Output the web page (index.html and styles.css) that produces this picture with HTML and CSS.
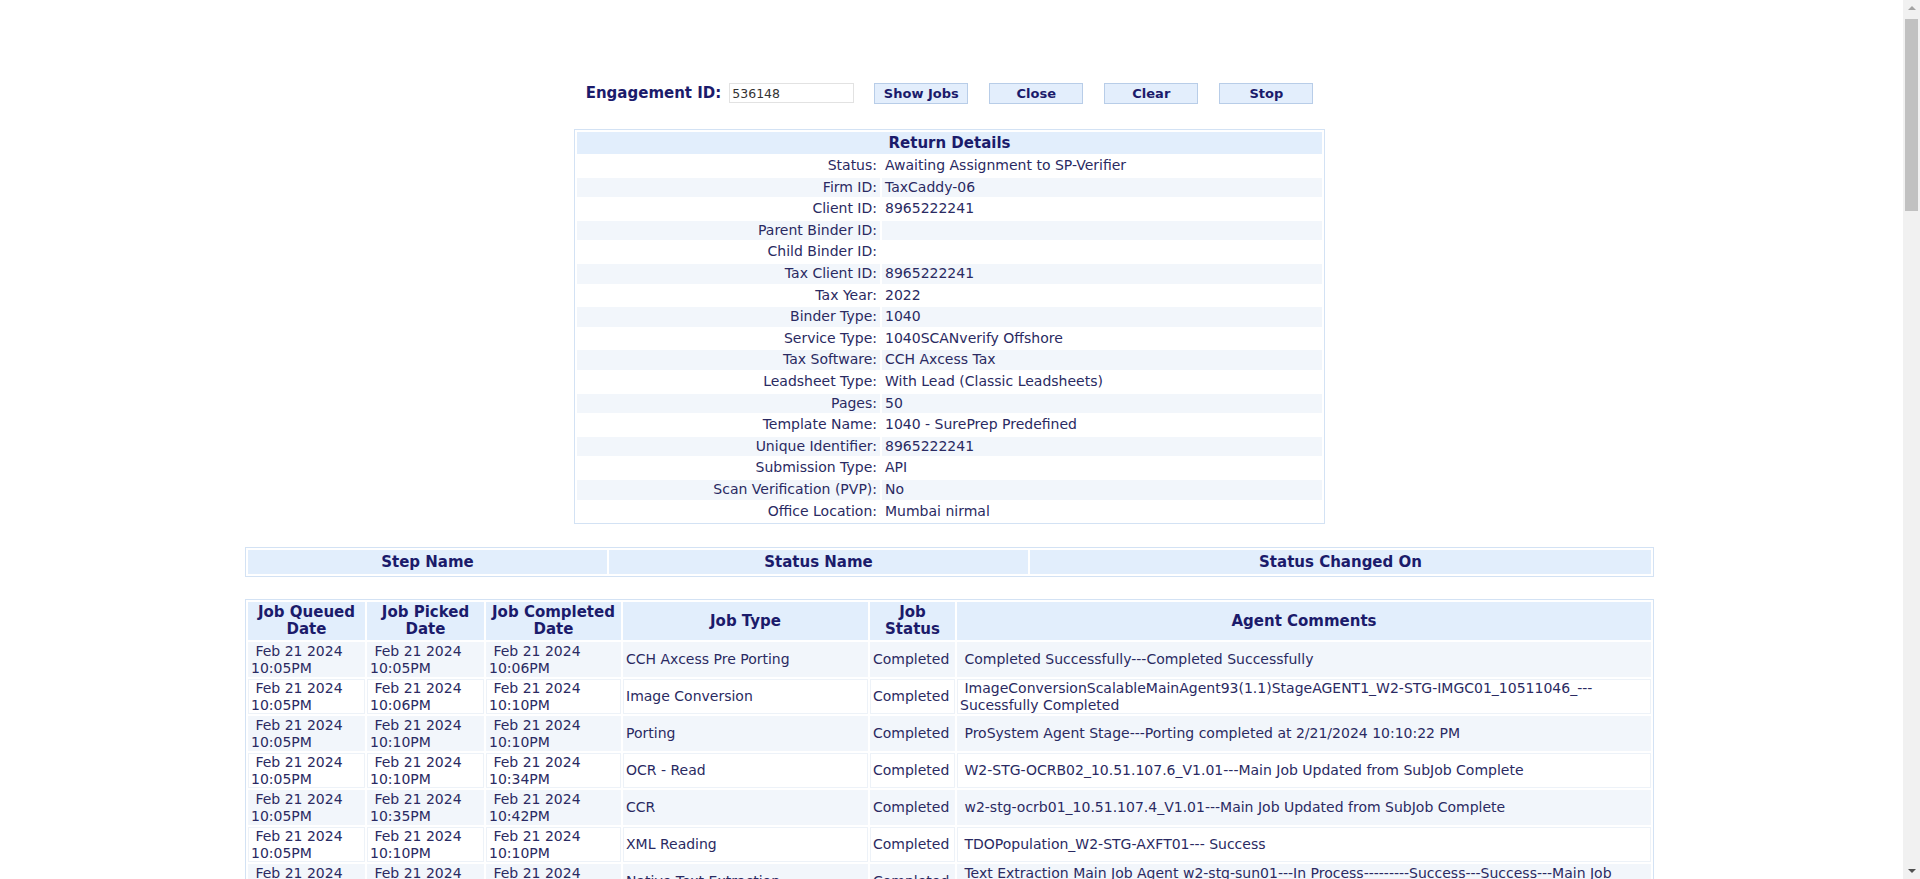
FILE: index.html
```html
<!DOCTYPE html>
<html>
<head>
<meta charset="utf-8">
<title>Job Status</title>
<link rel="stylesheet" href="styles.css">
</head>
<body>
<div class="page">
  <form class="search">
    <label class="search-label" for="eng">Engagement ID:</label>
    <input class="search-input" id="eng" type="text" value="536148">
    <div class="btns">
      <button type="button" class="btn">Show Jobs</button>
      <button type="button" class="btn">Close</button>
      <button type="button" class="btn">Clear</button>
      <button type="button" class="btn">Stop</button>
    </div>
  </form>

  <table class="details">
    <colgroup><col class="dcol-label"><col></colgroup>
    <tr><th colspan="2">Return Details</th></tr>
    <tr><td class="lbl">Status:</td><td>Awaiting Assignment to SP-Verifier</td></tr>
    <tr class="alt"><td class="lbl">Firm ID:</td><td>TaxCaddy-06</td></tr>
    <tr><td class="lbl">Client ID:</td><td>8965222241</td></tr>
    <tr class="alt"><td class="lbl">Parent Binder ID:</td><td></td></tr>
    <tr><td class="lbl">Child Binder ID:</td><td></td></tr>
    <tr class="alt"><td class="lbl">Tax Client ID:</td><td>8965222241</td></tr>
    <tr><td class="lbl">Tax Year:</td><td>2022</td></tr>
    <tr class="alt"><td class="lbl">Binder Type:</td><td>1040</td></tr>
    <tr><td class="lbl">Service Type:</td><td>1040SCANverify Offshore</td></tr>
    <tr class="alt"><td class="lbl">Tax Software:</td><td>CCH Axcess Tax</td></tr>
    <tr><td class="lbl">Leadsheet Type:</td><td>With Lead (Classic Leadsheets)</td></tr>
    <tr class="alt"><td class="lbl">Pages:</td><td>50</td></tr>
    <tr><td class="lbl">Template Name:</td><td>1040 - SurePrep Predefined</td></tr>
    <tr class="alt"><td class="lbl">Unique Identifier:</td><td>8965222241</td></tr>
    <tr><td class="lbl">Submission Type:</td><td>API</td></tr>
    <tr class="alt"><td class="lbl">Scan Verification (PVP):</td><td>No</td></tr>
    <tr><td class="lbl">Office Location:</td><td>Mumbai nirmal</td></tr>
  </table>

  <table class="steps">
    <colgroup><col class="scol-1"><col class="scol-2"><col></colgroup>
    <tr><th>Step Name</th><th>Status Name</th><th>Status Changed On</th></tr>
  </table>

  <table class="jobs">
    <colgroup>
      <col class="jcol-1"><col class="jcol-2"><col class="jcol-3"><col class="jcol-4"><col class="jcol-5"><col>
    </colgroup>
    <tr><th>Job Queued Date</th><th>Job Picked Date</th><th>Job Completed Date</th><th>Job Type</th><th>Job Status</th><th>Agent Comments</th></tr>
    <tr class="alt"><td>&nbsp;Feb 21 2024 10:05PM</td><td>&nbsp;Feb 21 2024 10:05PM</td><td>&nbsp;Feb 21 2024 10:06PM</td><td>CCH Axcess Pre Porting</td><td>Completed</td><td>&nbsp;Completed Successfully---Completed Successfully</td></tr>
    <tr><td>&nbsp;Feb 21 2024 10:05PM</td><td>&nbsp;Feb 21 2024 10:06PM</td><td>&nbsp;Feb 21 2024 10:10PM</td><td>Image Conversion</td><td>Completed</td><td>&nbsp;ImageConversionScalableMainAgent93(1.1)StageAGENT1_W2-STG-IMGC01_10511046_---Sucessfully Completed</td></tr>
    <tr class="alt"><td>&nbsp;Feb 21 2024 10:05PM</td><td>&nbsp;Feb 21 2024 10:10PM</td><td>&nbsp;Feb 21 2024 10:10PM</td><td>Porting</td><td>Completed</td><td>&nbsp;ProSystem Agent Stage---Porting completed at 2/21/2024 10:10:22 PM</td></tr>
    <tr><td>&nbsp;Feb 21 2024 10:05PM</td><td>&nbsp;Feb 21 2024 10:10PM</td><td>&nbsp;Feb 21 2024 10:34PM</td><td>OCR - Read</td><td>Completed</td><td>&nbsp;W2-STG-OCRB02_10.51.107.6_V1.01---Main Job Updated from SubJob Complete</td></tr>
    <tr class="alt"><td>&nbsp;Feb 21 2024 10:05PM</td><td>&nbsp;Feb 21 2024 10:35PM</td><td>&nbsp;Feb 21 2024 10:42PM</td><td>CCR</td><td>Completed</td><td>&nbsp;w2-stg-ocrb01_10.51.107.4_V1.01---Main Job Updated from SubJob Complete</td></tr>
    <tr><td>&nbsp;Feb 21 2024 10:05PM</td><td>&nbsp;Feb 21 2024 10:10PM</td><td>&nbsp;Feb 21 2024 10:10PM</td><td>XML Reading</td><td>Completed</td><td>&nbsp;TDOPopulation_W2-STG-AXFT01--- Success</td></tr>
    <tr class="alt"><td>&nbsp;Feb 21 2024 10:05PM</td><td>&nbsp;Feb 21 2024 10:10PM</td><td>&nbsp;Feb 21 2024 10:11PM</td><td>Native Text Extraction</td><td>Completed</td><td>&nbsp;Text Extraction Main Job Agent w2-stg-sun01---In Process---------Success---Success---Main Job Updated from SubJob Complete</td></tr>
    <tr><td>&nbsp;Feb 21 2024 10:05PM</td><td>&nbsp;Feb 21 2024 10:11PM</td><td>&nbsp;Feb 21 2024 10:12PM</td><td>Data Extraction</td><td>Completed</td><td>&nbsp;W2-STG-DEXT01---Main Job Updated from SubJob Complete</td></tr>
    <tr class="alt"><td>&nbsp;Feb 21 2024 10:05PM</td><td>&nbsp;Feb 21 2024 10:42PM</td><td>&nbsp;Feb 21 2024 10:44PM</td><td>Classification</td><td>Completed</td><td>&nbsp;W2-STG-CLSF01---Completed Successfully</td></tr>
    <tr><td>&nbsp;Feb 21 2024 10:05PM</td><td>&nbsp;Feb 21 2024 10:44PM</td><td>&nbsp;Feb 21 2024 10:45PM</td><td>Bookmarking</td><td>Completed</td><td>&nbsp;W2-STG-BKMK01---Completed Successfully</td></tr>
  </table>
</div>

<div class="scrollbar" aria-hidden="true">
  <div class="sb-arrow sb-up"></div>
  <div class="sb-track"><div class="sb-thumb"></div></div>
  <div class="sb-arrow sb-down"></div>
</div>
</body>
</html>
```

FILE: styles.css
```css
html, body {
  margin: 0;
  padding: 0;
  background: #ffffff;
}

body {
  font-family: "DejaVu Sans", sans-serif;
  font-size: 14px;
  color: #2a2a62;
}

.page {
  display: flex;
  flex-direction: column;
  align-items: center;
  margin-right: 21px;
  padding-top: 79px;
  padding-bottom: 40px;
}

/* search form */
.search {
  display: flex;
  align-items: center;
  margin: 0;
  height: 28px;
}

.search-label {
  font-weight: bold;
  font-size: 15px;
  color: #1b1b6b;
  margin-right: 8px;
}

.search-input {
  width: 125px;
  height: 20px;
  box-sizing: border-box;
  border: 1px solid #e2e2e2;
  padding: 0 2px;
  font-family: "DejaVu Sans", sans-serif;
  font-size: 12.5px;
  color: #333;
}

.btns {
  display: flex;
  gap: 21px;
  margin-left: 20px;
}

.btn {
  width: 94px;
  height: 21px;
  box-sizing: border-box;
  background: #e3eefc;
  border: 1px solid #b8cde8;
  font-family: "DejaVu Sans", sans-serif;
  font-weight: bold;
  font-size: 13px;
  color: #1b1b6b;
  padding: 0;
}

/* shared table look */
table {
  border-collapse: separate;
  border-spacing: 2px;
  border: 1px solid #d3e2f4;
  table-layout: fixed;
}

th {
  background: #e2eefc;
  color: #1b1b6b;
  font-weight: bold;
  font-size: 15px;
}

/* return details */
.details {
  width: 751px;
  margin-top: 22px;
}

.dcol-label {
  width: 303px;
}

.details th {
  padding: 0;
  height: 22px;
  line-height: 22px;
}

.details td {
  padding: 0 3px;
  height: 19.6px;
  line-height: 19.6px;
  white-space: nowrap;
}

.details td.lbl {
  text-align: right;
}

.details tr.alt td {
  background: #f2f6fb;
}

/* steps */
.steps {
  width: 1409px;
  margin-top: 23px;
}

.scol-1 { width: 359px; }
.scol-2 { width: 419px; }

.steps th {
  height: 24px;
  padding: 0;
  line-height: 24px;
}

/* jobs */
.jobs {
  width: 1409px;
  margin-top: 22px;
}

.jcol-1 { width: 117px; }
.jcol-2 { width: 117px; }
.jcol-3 { width: 135px; }
.jcol-4 { width: 245px; }
.jcol-5 { width: 85px; }

.jobs th {
  padding: 2px 1px;
  line-height: 17px;
  height: 34px;
}

.jobs td {
  padding: 0 2px;
  line-height: 16.5px;
  height: 33px;
  border: 1px solid #edf2f8;
  background: #ffffff;
  vertical-align: middle;
}

.jobs tr.alt td {
  background: #f2f6fb;
  border-color: #f2f6fb;
}

/* browser scrollbar imitation */
.scrollbar {
  position: fixed;
  top: 0;
  right: 0;
  width: 17px;
  height: 100vh;
  background: #f1f1f1;
  display: flex;
  flex-direction: column;
}

.sb-arrow {
  height: 17px;
  flex: none;
  position: relative;
}

.sb-arrow::after {
  content: "";
  position: absolute;
  left: 5px;
  border-left: 4px solid transparent;
  border-right: 4px solid transparent;
}

.sb-up::after {
  top: 6px;
  border-bottom: 4px solid #a3a3a3;
}

.sb-down::after {
  top: 7px;
  border-top: 4px solid #505050;
}

.sb-track {
  flex: 1;
  padding: 2px 2px 0 2px;
}

.sb-thumb {
  height: 192px;
  background: #c1c1c1;
}
```
